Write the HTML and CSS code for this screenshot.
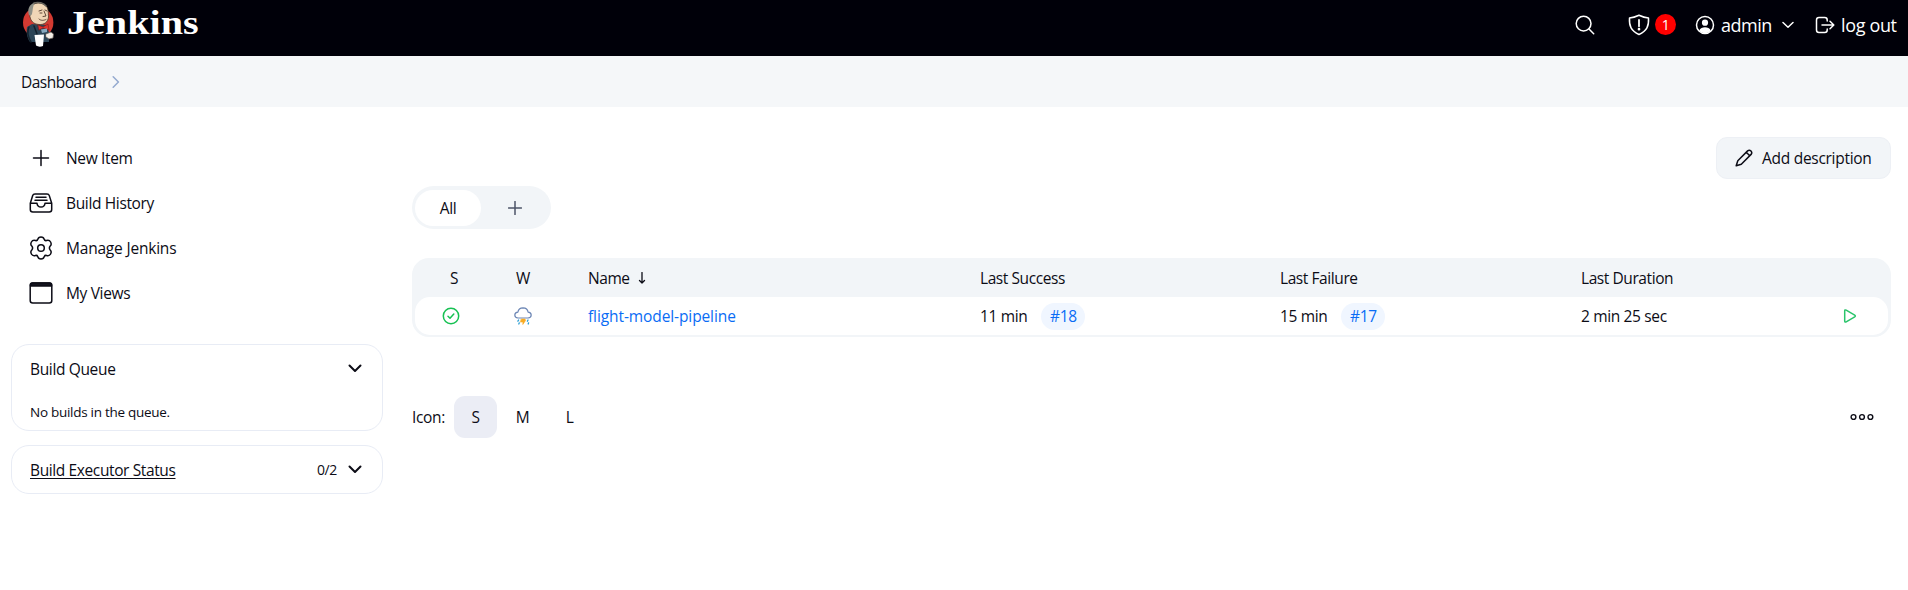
FILE: index.html
```html
<!DOCTYPE html>
<html lang="en">
<head>
<meta charset="utf-8">
<title>Dashboard [Jenkins]</title>
<link rel="stylesheet" href="styles.css">
</head>
<body>
<header class="header">
  <a class="brand">
    <svg class="butler" viewBox="0 0 34 48">
      <ellipse cx="16.2" cy="22.500" rx="15.2" ry="15.500" fill="#d33a32"/>
      <path d="M5 27L10 24L24 25L27 32L27 42L8 42C5 38 4 32 5 27Z" fill="#2c4557"/>
      <path d="M9 42C6 37 5 31 7 27M12 26L15 34" stroke="#14222d" fill="none"/>
      <path d="M8 9C9 3 18 1 23 5C27 8 26 12 26.500 17C26 22 22 25 17 24.500C11 24 9 21 8 17Z" fill="#f0d6b7" stroke="#493728" stroke-width=".8"/>
      <path d="M7 15C5 10 7 4 13 2.500C10.500 6 11 10 10 14C9 16 8 16 7 15Z" fill="#8e9088"/>
      <path d="M12 3C16 1.500 22 3 24 6" stroke="#67645e" fill="none"/>
      <path d="M17 11L20 10M23 10L25 11M22 11L24 16L21 16.500M17 19C19 21 22 20.500 24 19.500M18 13H20" stroke="#50382b" stroke-width=".9" fill="none"/>
      <path d="M16 25L21 27L26 24L27 30L21 28L17 30Z" fill="#e0312d" stroke="#7d1917" stroke-width=".6"/>
      <path d="M19 29.500L25 28.500L25 32L20 33Z" fill="#87a9bf"/>
      <path d="M12.500 35L22 34.500L21 46Q17 47.500 14 45.500Z" fill="#fff"/>
      <path d="M24 34L29 32L31.500 34L31 38L27 39L24 37Z" fill="#f2eee8" stroke="#6a625b" stroke-width=".7"/>
    </svg>
    <span class="brand-name">Jenkins</span>
  </a>
  <nav class="header-nav">
    <svg class="i-search" viewBox="0 0 20 20"><circle cx="8.6" cy="8.6" r="7.4"/><path d="M14 14L18.7 18.7"/></svg>
    <svg class="i-shield" viewBox="0 0 22 22"><path d="M11 1.2Q6 3.6 1.5 4C1 12 3 17 11 20.5C19 17 21 12 20.5 4Q16 3.6 11 1.2Z"/><path d="M11 6V12.3" stroke-width="1.8"/><circle cx="11" cy="15.2" r=".6" fill="#fff"/></svg>
    <span class="alert-badge">1</span>
    <svg class="i-user" viewBox="0 0 20 20"><circle cx="10" cy="10" r="8.5"/><circle cx="10" cy="7.7" r="3.1" fill="#fff" stroke="none"/><path d="M4.3 15.5C6 11.2 14 11.2 15.7 15.5C13 19 7 19 4.3 15.5Z" fill="#fff" stroke="none"/></svg>
    <span class="admin">admin</span>
    <svg class="i-caret" viewBox="0 0 12 8"><path d="M1 1.5L6 6.3L11 1.5"/></svg>
    <svg class="i-logout" viewBox="0 0 20 18"><path d="M12.2 5V4Q12.2 1.5 9.7 1.5H4Q1.5 1.5 1.5 4V14Q1.5 16.5 4 16.5H9.7Q12.2 16.5 12.2 14V13M7 9H18.5M15 5.2L18.8 9L15 12.8"/></svg>
    <span class="logout">log out</span>
  </nav>
</header>
<div class="breadcrumbs"><span>Dashboard</span>
  <svg class="i-crumb" viewBox="0 0 8 12"><path d="M1.2 .8L6.4 6L1.2 11.2"/></svg>
</div>
<div class="page">
  <aside class="sidebar">
    <ul class="tasks">
      <li><svg viewBox="0 0 24 24"><path d="M12 4.5V19.5M4.5 12H19.5"/></svg><span>New Item</span></li>
      <li><svg viewBox="0 0 24 24"><path d="M1.3 12.2L3.7 4.6Q4.2 3 6 3H18Q19.800 3 20.300 4.600L22.700 12.200V18.500Q22.700 21 20.200 21H3.800Q1.300 21 1.300 18.500ZM1.300 12.200H8Q8.300 16 12 16Q15.700 16 16 12.200H22.700M7 6.200H17M6 9.200H18"/></svg><span>Build History</span></li>
      <li><svg viewBox="0 0 24 24"><path d="M8.800 3.300Q9.300 .9 12 .9Q14.700 .9 15.200 3.300Q15.700 5 17.600 4.500Q20.300 3.700 21.600 6Q22.900 8.300 21.200 10.100Q19.600 12 21.200 13.900Q22.900 15.700 21.600 18Q20.300 20.300 17.600 19.500Q15.700 19 15.200 20.700Q14.700 23.100 12 23.100Q9.300 23.100 8.800 20.700Q8.300 19 6.400 19.500Q3.700 20.300 2.400 18Q1.100 15.700 2.800 13.900Q4.400 12 2.800 10.100Q1.100 8.300 2.400 6Q3.700 3.700 6.400 4.500Q8.300 5 8.800 3.300Z"/><circle cx="12" cy="12" r="3.300"/></svg><span class="manage">Manage Jenkins</span></li>
      <li><svg viewBox="0 0 24 24"><rect x="1.200" y="2" width="21.600" height="20" rx="2.500"/><path d="M1.500 5V4Q1.500 2 3.500 2H20.500Q22.500 2 22.500 4V5Z" fill="#14141f"/></svg><span>My Views</span></li>
    </ul>
    <section class="pane queue">
      <div class="pane-head"><span class="pane-title">Build Queue</span><svg class="i-fold" viewBox="0 0 14 9"><path d="M1.500 1.500L7 7L12.500 1.500"/></svg></div>
      <p class="pane-text">No builds in the queue.</p>
    </section>
    <section class="pane executors">
      <div class="pane-head"><a class="pane-title exec-title">Build Executor Status</a><span class="pane-count">0/2</span><svg class="i-fold" viewBox="0 0 14 9"><path d="M1.500 1.500L7 7L12.500 1.500"/></svg></div>
    </section>
  </aside>
  <main class="main">
    <button class="describe"><svg viewBox="0 0 18 18"><path d="M1.200 16.800L2.800 11.700L12.600 1.900Q14.300 .5 16 2Q17.500 3.700 16.100 5.400L6.300 15.200ZM11.300 3.300L14.700 6.700"/></svg><span>Add description</span></button>
    <div class="tabs"><span class="tab">All</span><span class="tab-add"><svg viewBox="0 0 14 14"><path d="M7 .5V13.500M.5 7H13.500"/></svg></span></div>
    <div class="jobs">
      <div class="jobs-head cells"><span class="c-s">S</span><span class="c-w">W</span><span>Name<svg class="i-sort" viewBox="0 0 8 12"><path d="M4 .5V11M1.500 8.500L4 11L6.500 8.500"/></svg></span><span>Last Success</span><span>Last Failure</span><span>Last Duration</span><span></span></div>
      <div class="jobs-row cells">
        <span class="c-ok"><svg viewBox="0 0 18 18"><circle cx="9" cy="9" r="7.700"/><path d="M6 9.300L8 11.200L11.800 7"/></svg></span>
        <span class="c-storm"><svg viewBox="0 0 18 18"><path d="M4 11Q.8 10.800 .8 8Q.9 5.400 3.900 5.200Q4.500 1 9 .9Q13.500 1 14.100 5.200Q17.100 5.400 17.200 8Q17.200 10.800 14 11Z" stroke="#6c86b5" stroke-width="1.200"/><path d="M7.500 12H11L11.600 13.500L8.800 17.500L9 15H6.500Z" fill="#f9ab22" stroke="#f9ab22" stroke-width=".6"/><path d="M4.600 13L3.900 14.200M5.300 15.800L4.800 17M14 13L13.400 14.200M14.600 15.800L14.200 17" stroke="#2a9fd6" stroke-width="1.300"/></svg></span>
        <a class="job">flight-model-pipeline</a>
        <span class="when">11 min<a class="build">#18</a></span>
        <span class="when">15 min<a class="build">#17</a></span>
        <span class="dur">2 min 25 sec</span>
        <svg class="i-play" viewBox="0 0 14 14"><path d="M1.700 2Q1.700 .4 3.200 1.200L11.700 6.100Q13 7 11.700 7.900L3.200 12.800Q1.700 13.600 1.700 12Z"/></svg>
      </div>
    </div>
    <div class="sizes"><span class="sizes-label">Icon:</span><span class="size on">S</span><span class="size">M</span><span class="size">L</span>
      <svg class="i-more" viewBox="0 0 24 8"><circle cx="3.500" cy="4" r="2.400"/><circle cx="12" cy="4" r="2.400"/><circle cx="20.400" cy="4" r="2.400"/></svg>
    </div>
  </main>
</div>
</body>
</html>
```
FILE: styles.css
```css
* { box-sizing: border-box; }
body { margin: 0; background: #fff; color: #0c0c16; font: 15.5px/20px "Open Sans", "Noto Sans", sans-serif; letter-spacing: -.35px; }
svg { display: block; flex: none; fill: none; stroke: currentColor; stroke-width: 1.5; stroke-linecap: round; stroke-linejoin: round; }
span, a, p { white-space: nowrap; }
.header { height: 56px; background: #000009; color: #fff; display: flex; justify-content: space-between; }
.brand { display: flex; padding-left: 22px; }
.butler { width: 34px; height: 48px; stroke: none; }
.brand-name { margin-left: 11px; font: bold 34px/46px "Liberation Serif", serif; letter-spacing: 0; transform: scaleX(1.18); transform-origin: left; }
.header-nav { display: flex; align-items: center; height: 49px; padding-right: 9px; font-size: 18px; }
.i-search { width: 20px; height: 20px; margin-right: 33px; }
.i-shield { width: 22px; height: 22px; margin-right: 5px; }
.alert-badge { width: 21px; height: 21px; margin-right: 19px; border-radius: 50%; background: #f00; font-size: 14px; line-height: 21px; text-align: center; }
.i-user { width: 20px; height: 20px; }
.admin { width: 51px; margin: 0 10px 0 6px; letter-spacing: -.5px; }
.i-caret { width: 12px; height: 8px; margin-right: 21px; }
.i-logout { width: 20px; height: 18px; }
.logout { width: 58px; margin-left: 6px; }
.breadcrumbs { height: 51px; background: #f5f7f9; display: flex; align-items: center; padding-left: 21px; letter-spacing: -.5px; }
.breadcrumbs span { width: 76px; padding-top: 1px; }
.i-crumb { width: 8px; height: 12px; margin-left: 15px; stroke: #93a9cf; }
.page { display: flex; }
.sidebar { width: 372px; margin-left: 11px; padding-top: 28px; }
.tasks { list-style: none; margin: 0; padding: 0 0 29px 18px; }
.tasks li { display: flex; align-items: center; gap: 13px; height: 45px; }
.tasks svg { width: 24px; height: 24px; }
.manage { letter-spacing: -.2px; }
.pane { border: 1px solid #e8ecf5; border-radius: 18px; padding: 0 18px; }
.queue { height: 87px; margin-bottom: 14px; }
.executors { height: 49px; }
.pane-head { display: flex; align-items: center; height: 47px; }
.pane-title { margin-right: auto; }
.exec-title { text-decoration: underline; text-underline-offset: 2px; letter-spacing: -.38px; }
.pane-count { font-size: 14px; }
.i-fold { width: 14px; height: 9px; margin: 0 2px 0 11px; stroke-width: 2; }
.pane-text { margin: 10px 0 0; font-size: 13.5px; letter-spacing: -.28px; }
.main { width: 1479px; margin-left: 29px; padding-top: 30px; display: flex; flex-direction: column; }
.describe { align-self: flex-end; display: flex; align-items: center; gap: 9px; width: 175px; height: 42px; padding: 0 0 0 18px; border: 1px solid #edf0f5; border-radius: 11px; background: #f2f5f8; color: inherit; font: inherit; letter-spacing: -.28px; }
.describe svg { width: 18px; height: 18px; }
.tabs { display: flex; width: 139px; height: 43px; margin-top: 7px; padding: 4px 3px; border-radius: 22px; background: #f2f5f8; }
.tab { width: 66px; height: 36px; border-radius: 18px; background: #fff; line-height: 36px; text-align: center; }
.tab-add { padding: 11px 0 0 27px; color: #4d5468; }
.tab-add svg { width: 14px; height: 14px; }
.jobs { height: 79px; margin-top: 29px; padding: 0 3px 2px; border-radius: 17px; background: #f2f5f8; }
.cells { display: grid; grid-template-columns: 80px 93px 392px 300px 301px 260px 1fr; align-items: center; }
.jobs-head { height: 39px; padding-top: 1px; letter-spacing: -.42px; }
.jobs-row { height: 38px; border-radius: 15px; background: #fff; }
.c-s { padding-left: 35px; }
.c-w { padding-left: 21px; }
.c-ok { padding-left: 27px; color: #17c153; }
.c-storm { padding-left: 19px; }
.c-ok svg, .c-storm svg { width: 18px; height: 18px; }
.i-sort { display: inline-block; width: 8px; height: 12px; margin-left: 8px; stroke-width: 1.3; }
.job, .build { color: #0a6cf5; }
.job { letter-spacing: -.1px; }
.when { display: flex; align-items: center; }
.build { width: 44px; height: 27px; margin-left: 14px; border-radius: 14px; background: #f0f6ff; line-height: 27px; text-align: center; }
.i-play { width: 14px; height: 14px; margin-left: 2px; color: #2ac46b; }
.sizes { display: flex; align-items: center; height: 42px; margin-top: 59px; padding-right: 17px; }
.sizes-label { width: 42px; }
.size { width: 43px; height: 42px; margin-right: 4px; border-radius: 11px; line-height: 42px; text-align: center; }
.on { background: #ebedf5; }
.i-more { width: 24px; height: 8px; margin-left: auto; stroke-width: 1.4; }
```
